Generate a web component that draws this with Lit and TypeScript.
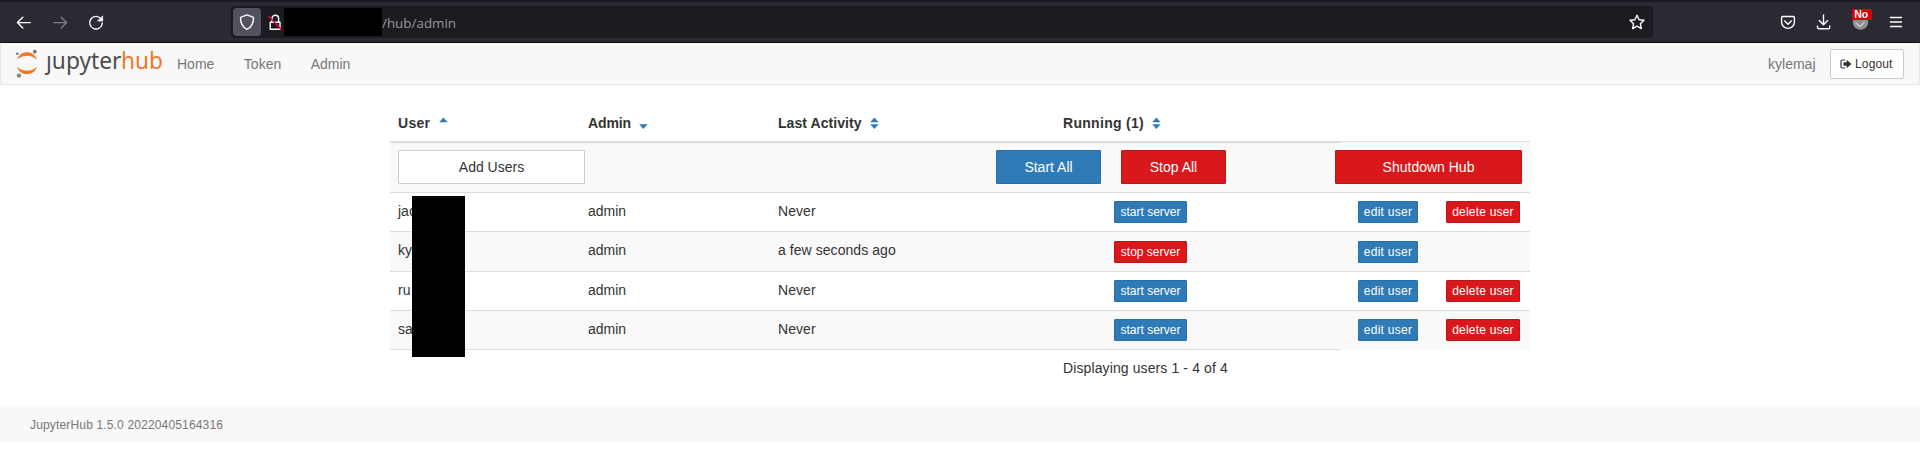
import { LitElement, html, svg, css, nothing } from "lit";
import { customElement } from "lit/decorators.js";

interface User { name: string; seen: string; running: boolean; removable: boolean; }

const users: User[] = [
  { name: "jac", seen: "Never", running: false, removable: true },
  { name: "ky", seen: "a few seconds ago", running: true, removable: false },
  { name: "ru", seen: "Never", running: false, removable: true },
  { name: "sa", seen: "Never", running: false, removable: true },
];

@customElement("browser-bar")
class BrowserBar extends LitElement {
  static styles = css`
    :host { display: flex; box-sizing: border-box; height: 43px; padding: 4px 12px 0 12px; border-top: 2px solid #1c1b22; border-bottom: 1px solid #0c0c0d; background: #2b2a33; align-items: flex-start; }
    svg { display: block; overflow: visible; fill: none; stroke: #fbfbfe; stroke-width: 1.4; stroke-linecap: round; stroke-linejoin: round; }
    .nav { display: flex; gap: 12px; width: 219px; padding-top: 4px; }
    .cell { width: 24px; height: 24px; }
    .dim { opacity: .4; }
    .url { display: flex; box-sizing: border-box; width: 1422px; height: 32px; padding: 2px; border-radius: 4px; background: #1c1b22; align-items: flex-start; }
    .shield { width: 28px; height: 28px; border-radius: 4px; background: #52525e; }
    .lock { width: 23px; height: 28px; }
    .mask { width: 98px; height: 28px; background: #000; }
    .path { flex: 1; font: 13.4px/28px "Open Sans", "Noto Sans", sans-serif; color: #96959d; padding-top: 1px; }
    .star { width: 28px; height: 28px; }
    .tools { display: flex; gap: 12px; padding: 4px 0 0 123px; }
    .badge { font: bold 10.5px "Liberation Sans", sans-serif; fill: #fff; stroke: none; }
  `;
  render() {
    return html`
      <div class="nav">
        <svg class="cell" viewBox="0 0 24 24"><path d="M18.3 12.6H5.5M10.8 7.2L5.400 12.600L10.800 18"/></svg>
        <svg class="cell dim" viewBox="0 0 24 24"><path d="M5.700 12.600h12.800M13.200 7.200l5.400 5.400L13.200 18"/></svg>
        <svg class="cell" viewBox="0 0 24 24"><path d="M17.300 9.300A6.300 6.300 0 1 0 18.300 13"/><path d="M18.600 6.300v4.700h-4.700z" fill="#fbfbfe" stroke-width=".8"/></svg>
      </div>
      <div class="url">
        <svg class="shield" viewBox="0 0 28 28"><path d="M14 6.900L20.500 9.300C20.600 14.800 19 19 14 21.400C9 19 7.400 14.800 7.500 9.300z"/></svg>
        <svg class="lock" viewBox="0 0 23 28"><path d="M11 13.700V10.600a3.300 3.300 0 0 1 6.600 0v3.100M9.200 14.200h9.800v7H9.200z"/><path d="M7.700 8.300L20.300 21.500" stroke="#e3003c" stroke-width="1.500"/></svg>
        <div class="mask"></div>
        <div class="path">/hub/admin</div>
        <svg class="star" viewBox="0 0 28 28"><path d="M14 7.200l2.100 4.500 4.900.6-3.600 3.400.9 4.900L14 18.200l-4.300 2.400.9-4.900L7 12.300l4.900-.6z"/></svg>
      </div>
      <div class="tools">
        <svg class="cell" viewBox="0 0 24 24"><path d="M6.600 6.500h10.800a1 1 0 0 1 1 1V12a6.400 6.400 0 0 1-12.800 0V7.500a1 1 0 0 1 1-1zM8.700 11l3.300 3.200 3.300-3.200"/></svg>
        <svg class="cell" viewBox="0 0 24 24"><path d="M11.500 5v9.500M7.300 10.500l4.200 4.200 4.200-4.200M5.500 16v1.400a1.300 1.300 0 0 0 1.300 1.300h9.600a1.300 1.300 0 0 0 1.300-1.300V16"/></svg>
        <svg class="cell" viewBox="0 0 24 24"><circle cx="12.500" cy="12" r="7.800" fill="#8f8f8f" stroke="none"/><path d="M8 13l4 3.500 4-4" stroke="#ccc"/><rect x="4" y="-1" width="20" height="11" rx="1" fill="#d70000" stroke="none"/><text class="badge" x="6.200" y="8.300">No</text></svg>
        <svg class="cell" viewBox="0 0 24 24"><path d="M6.500 7.500h11M6.500 12h11M6.500 16.500h11"/></svg>
      </div>`;
  }
}

@customElement("hub-nav")
class HubNav extends LitElement {
  static styles = css`
    :host { display: flex; box-sizing: border-box; height: 42px; border: 1px solid #e7e7e7; border-top: 0; border-radius: 2px; background: #f8f8f8; color: #777; align-items: flex-start; font: 14px/20px "Liberation Sans", Arial, sans-serif; }
    .logo { display: block; overflow: visible; width: 162px; height: 41px; font: 23.5px "Noto Sans", "Open Sans", sans-serif; }
    .links { display: flex; gap: 29.5px; padding: 11px 0 0 14px; flex: 1; }
    .who { padding: 11px 14.5px 0 0; }
    .logout { display: flex; box-sizing: border-box; height: 30px; width: 74px; margin: 6px 15px 0 0; border: 1px solid #ccc; border-radius: 1px; background: #fff; color: #333; font-size: 12px; align-items: center; padding-left: 9px; gap: 3px; letter-spacing: .15px; }
    .exit { width: 12px; height: 10px; }
  `;
  render() {
    return html`
      <svg class="logo" viewBox="0 0 162 41">
        <path d="M16 16.600C19 6.700 33 6.700 36 16.600C30.500 11.400 21.500 11.400 16 16.600zM16 23.700C19 33.600 33 33.600 36 23.700C30.500 28.900 21.500 28.900 16 23.700z" fill="#f37726"/>
        <circle cx="16.300" cy="10.700" r="1.300" fill="#757575"/><circle cx="33.800" cy="8.700" r="1.900" fill="#757575"/><circle cx="18" cy="32.600" r="2.200" fill="#8a8a8a"/>
        <text x="45" y="26" fill="#4e4e4e" textLength="75.500" lengthAdjust="spacingAndGlyphs">ȷupyter</text>
        <text x="120" y="26" fill="#f37726" textLength="42" lengthAdjust="spacingAndGlyphs">hub</text>
      </svg>
      <div class="links"><span>Home</span><span>Token</span><span>Admin</span></div>
      <div class="who">kylemaj</div>
      <div class="logout"><svg class="exit" viewBox="0 0 12 10"><path d="M5 1H2.500A1.500 1.500 0 0 0 1 2.500v5A1.500 1.500 0 0 0 2.500 9H5" fill="none" stroke="#333" stroke-width="1.200"/><path d="M3.500 3.300h3.200V.8L11.500 5 6.700 9.200V6.700H3.500z" fill="#333"/></svg><span>Logout</span></div>`;
  }
}

@customElement("user-table")
class UserTable extends LitElement {
  static styles = css`
    :host { display: block; position: relative; width: 1140px; margin: 0 auto; padding-top: 20px; color: #333; font: 14px/20px "Liberation Sans", Arial, sans-serif; }
    .row { display: grid; grid-template-columns: 190px 190px 285px 285px 95px 95px; box-sizing: border-box; height: 39px; border-top: 1px solid #ddd; }
    .row > .text { padding: 8px 8px 0; }
    .seen { letter-spacing: .06px; }
    .tall { height: 40px; }
    .alt { background: #f9f9f9; }
    .head { border-top: 0; height: 36px; font-weight: bold; }
    .title { display: flex; gap: 8px; padding: 8px 8px 0; white-space: nowrap; }
    .user { width: 33px; letter-spacing: .3px; }
    .admin { width: 43px; letter-spacing: -.1px; }
    .activity { width: 84px; letter-spacing: .06px; }
    .running { width: 81px; letter-spacing: .3px; }
    .sort { display: block; width: 9px; height: 20px; fill: #337ab7; }
    .rule { display: flex; height: 2px; background: #f9f9f9; }
    .rule .thick { width: 950px; height: 2px; background: #ddd; }
    .rule .thin { flex: 1; height: 1px; background: #ddd; }
    .actions { display: flex; box-sizing: border-box; height: 49px; padding: 7px 8px 0; background: #f9f9f9; }
    .btn { box-sizing: border-box; height: 34px; border: 1px solid #ccc; border-radius: 1px; text-align: center; padding-top: 6px; background: #fff; }
    .wide { width: 187px; }
    .mid { width: 105px; }
    .start { margin-left: 411px; }
    .stop { margin-left: 20px; }
    .shut { margin-left: auto; }
    .blue { color: #fff; background: #2e7bb8; border-color: #286da4; }
    .red { color: #fff; background: #d9181b; border-color: #bd1518; }
    .xs { height: 22px; padding: 1px 0 0; font-size: 12px; line-height: 18px; margin-top: 8px; }
    .tall .xs { margin-top: 9px; }
    .server { width: 73px; margin-left: 59px; }
    .edit { width: 60px; margin-left: 18px; letter-spacing: .25px; }
    .del { width: 74px; margin-left: 11px; letter-spacing: .2px; }
    .last { display: flex; }
    .end { width: 950px; height: 1px; background: #ddd; }
    .endfill { flex: 1; height: 1px; background: #f9f9f9; }
    .count { padding: 8px 0 0 673px; height: 48px; letter-spacing: .11px; }
    .mask { position: absolute; left: 22px; top: 111px; width: 53px; height: 161px; background: #000; }
  `;
  private title(label: string, kind: string, up: boolean, down: boolean) {
    return html`<div class="title"><span class=${kind}>${label}</span><svg class="sort" viewBox="0 0 9 20">
      ${up ? svg`<path d="M.2 9.200L4.400 4.500L8.600 9.200z"/>` : nothing}
      ${down ? svg`<path d="M.2 11.300L4.400 16L8.600 11.300z"/>` : nothing}
    </svg></div>`;
  }
  render() {
    return html`
      <div class="row head">${this.title("User", "user", true, false)}${this.title("Admin", "admin", false, true)}${this.title("Last Activity", "activity", true, true)}${this.title("Running (1)", "running", true, true)}</div>
      <div class="rule"><div class="thick"></div><div class="thin"></div></div>
      <div class="actions"><div class="btn wide">Add Users</div><div class="btn mid blue start">Start All</div><div class="btn mid red stop">Stop All</div><div class="btn wide red shut">Shutdown Hub</div></div>
      ${users.map((u, i) => html`<div class="row ${i % 2 ? "alt" : ""} ${i === 1 ? "tall" : ""}">
        <div class="text">${u.name}</div><div class="text">admin</div><div class="text seen">${u.seen}</div>
        <div class="btn xs server ${u.running ? "red" : "blue"}">${u.running ? "stop server" : "start server"}</div>
        <div class="btn xs edit blue">edit user</div>
        ${u.removable ? html`<div class="btn xs del red">delete user</div>` : nothing}
      </div>`)}
      <div class="last"><div class="end"></div><div class="endfill"></div></div>
      <div class="count">Displaying users 1 - 4 of 4</div>
      <div class="mask"></div>`;
  }
}

@customElement("app-root")
class AppRoot extends LitElement {
  static styles = css`
    :host { display: block; height: 454px; background: #fff; overflow: hidden; }
    .foot { box-sizing: border-box; height: 37px; padding: 10px 30px 0; background: #f8f8f8; color: #777; font: 12px/18px "Liberation Sans", Arial, sans-serif; letter-spacing: .16px; }
  `;
  render() {
    return html`<browser-bar></browser-bar><hub-nav></hub-nav><user-table></user-table><div class="foot">JupyterHub 1.5.0 20220405164316</div>`;
  }
}
